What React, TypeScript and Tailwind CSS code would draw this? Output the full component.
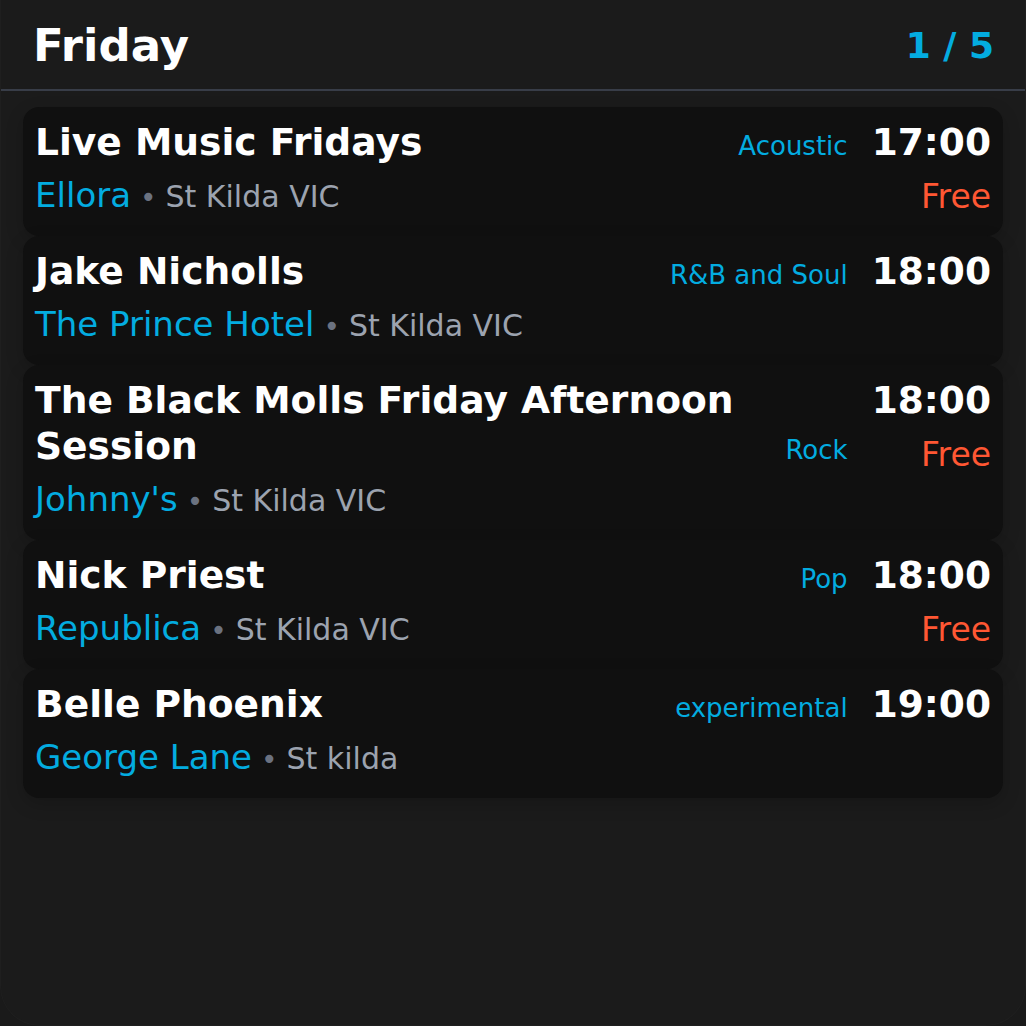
import React from 'react'

type Gig = {
  id: number
  title: string
  venue: string
  location: string
  genre: string
  time: string
  free?: boolean
}

const GIGS: Gig[] = [
  { id: 1, title: 'Live Music Fridays', venue: 'Ellora', location: 'St Kilda VIC', genre: 'Acoustic', time: '17:00', free: true },
  { id: 2, title: 'Jake Nicholls', venue: 'The Prince Hotel', location: 'St Kilda VIC', genre: 'R&B and Soul', time: '18:00' },
  { id: 3, title: 'The Black Molls Friday Afternoon Session', venue: "Johnny's", location: 'St Kilda VIC', genre: 'Rock', time: '18:00', free: true },
  { id: 4, title: 'Nick Priest', venue: 'Republica', location: 'St Kilda VIC', genre: 'Pop', time: '18:00', free: true },
  { id: 5, title: 'Belle Phoenix', venue: 'George Lane', location: 'St kilda', genre: 'experimental', time: '19:00' },
]

function GigCard({ gig }: { gig: Gig }) {
  return (
    <div className="flex gap-6 rounded-2xl bg-[#101010] pl-3 pr-3 pt-3 pb-4 shadow-[0_6px_18px_rgba(0,0,0,0.18)]">
      {/* Title, genre and venue */}
      <div className="flex min-w-0 flex-1 flex-col">
        <div className="flex items-baseline-last gap-6">
          <h3 className="min-w-0 flex-1 text-[37.6px] font-bold leading-[46px] text-white">
            {gig.title}
          </h3>
          <span className="text-[26px] leading-[34px] text-[#03ace0]">{gig.genre}</span>
        </div>
        <div className="mt-2 flex items-baseline leading-[44px]">
          <span className="text-[34px] text-[#03ace0]">{gig.venue}</span>
          <span className="mx-[9px] text-[28px] text-[#6b7280]">•</span>
          <span className="text-[30px] text-[#9ca3af]">{gig.location}</span>
        </div>
      </div>

      {/* Time and price */}
      <div className="flex flex-col items-end">
        <span className="text-[37.5px] font-bold leading-[46px] text-white">{gig.time}</span>
        {gig.free && (
          <span className="mt-[10px] text-[33px] leading-[44px] text-[#ff5733]">Free</span>
        )}
      </div>
    </div>
  )
}

export default function App() {
  return (
    <div
      className="h-[1026px] w-full bg-[#1a1a1a]"
      style={{ fontFamily: '"DejaVu Sans", Verdana, sans-serif' }}
    >
      <div className="flex h-full flex-col overflow-hidden rounded-b-[40px] border border-t-0 border-[#1f1f1f] bg-[#1b1b1b]">
        {/* Header */}
        <div className="flex h-[91px] shrink-0 items-center justify-between border-b-2 border-[#383d48] pl-8 pr-[31px] pt-[2px]">
          <h1 className="text-[45px] font-bold text-white">Friday</h1>
          <span className="text-[36px] font-bold text-[#03ace0]">1 / 5</span>
        </div>

        {/* Gig list */}
        <div className="flex flex-col px-[22px] pt-4">
          {GIGS.map((gig) => (
            <GigCard key={gig.id} gig={gig} />
          ))}
        </div>
      </div>
    </div>
  )
}
